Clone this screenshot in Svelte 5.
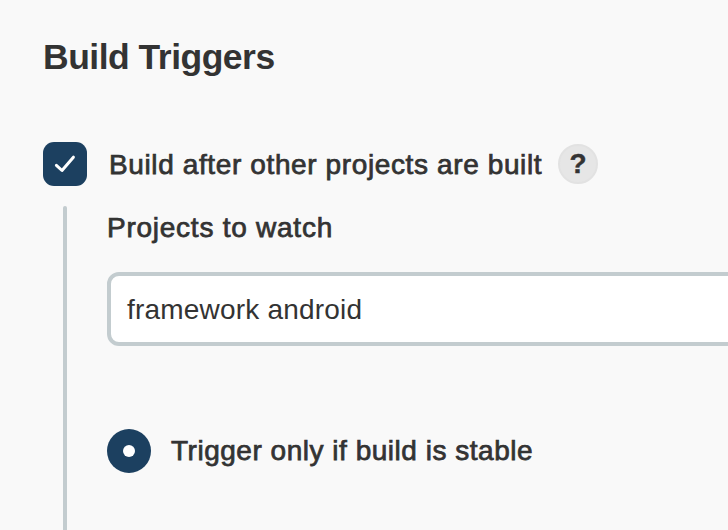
<script>
  let project = $state('framework android');
</script>

<main>
  <h1>Build Triggers</h1>
  <div class="row">
    <span class="check">
      <svg width="44" height="44" viewBox="0 0 44 44"><path d="M13.4 23.3l5.6 5.2L30.4 15.2" fill="none" stroke="#fff" stroke-width="3" stroke-linecap="round" stroke-linejoin="round" /></svg>
    </span>
    <span class="label main-label">Build after other projects are built</span>
    <span class="help"><b>?</b></span>
  </div>
  <section>
    <div class="label watch">Projects to watch</div>
    <div class="field"><span>{project}</span></div>
    <div class="row option">
      <span class="radio"><i></i></span>
      <span class="label stable">Trigger only if build is stable</span>
    </div>
  </section>
</main>

<style>
  :global(body) { background: #f9f9f9; overflow: hidden; }
  main { box-sizing: border-box; width: 728px; height: 530px; padding: 36px 0 0 43px; overflow: hidden; display: flex; flex-direction: column; background: #f9f9f9; color: #333; font-family: "Liberation Sans", Arial, sans-serif; white-space: nowrap; }
  h1 { margin: 0 0 64px; height: 42px; line-height: 42px; font-size: 35.5px; font-weight: 700; letter-spacing: -0.5px; }
  .row { display: flex; align-items: center; height: 44px; }
  .label { font-size: 28px; line-height: 32px; -webkit-text-stroke: 0.75px #333; }
  .check { width: 44px; height: 44px; border-radius: 11px; background: #1c4060; flex: none; }
  .check svg { display: block; }
  .main-label { margin-left: 22px; padding-top: 2px; width: 433px; letter-spacing: 0.62px; }
  .help { margin-left: 16px; box-sizing: border-box; width: 40px; height: 40px; border: 2px solid #e2e2e2; border-radius: 50%; background: #e6e6e6; display: flex; align-items: center; justify-content: center; font-size: 28px; -webkit-text-stroke: 0.4px #333; }
  section { position: relative; margin: 20px 0 0 20px; padding-left: 44px; flex: 1; }
  section::before { content: ""; position: absolute; inset: 0 auto -4px 0; width: 4px; border-radius: 2px; background: #c3cccf; }
  .watch { padding-top: 6px; height: 60px; letter-spacing: 0.75px; }
  .field { box-sizing: border-box; width: 660px; height: 74px; border: 4px solid #c3cccf; border-radius: 12px; background: #fff; display: flex; align-items: center; padding: 2px 0 0 16px; font-size: 28px; letter-spacing: 0.2px; }
  .option { margin-top: 83px; }
  .radio { width: 44px; height: 44px; border-radius: 50%; background: #1c4060; display: flex; align-items: center; justify-content: center; }
  .radio i { width: 12px; height: 12px; border-radius: 50%; background: #fff; }
  .stable { margin-left: 20px; letter-spacing: 0.52px; }
</style>
